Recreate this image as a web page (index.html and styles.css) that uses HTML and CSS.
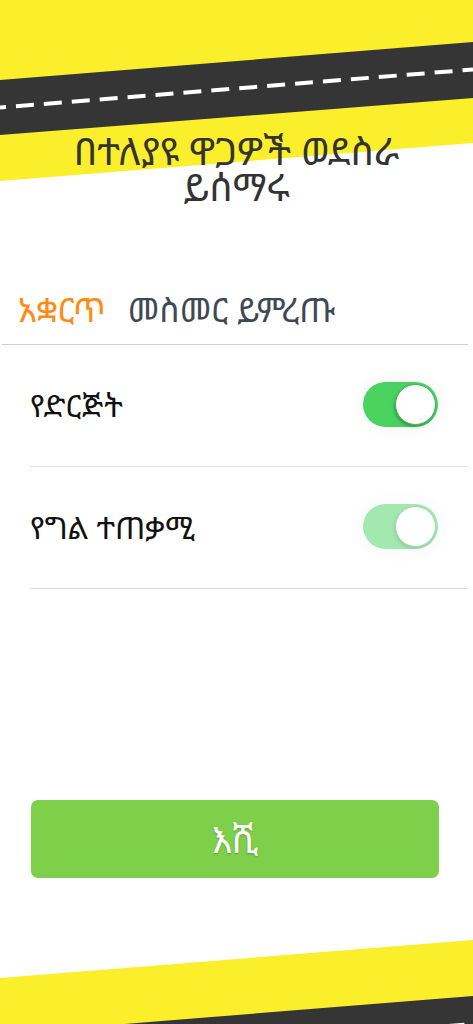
FILE: index.html
```html
<!DOCTYPE html>
<html lang="am">
<head>
    <meta charset="UTF-8">
    <meta name="viewport" content="width=device-width, initial-scale=1.0">
    <title>ወደስራ ይሰማሩ</title>
    <link rel="stylesheet" href="styles.css">
</head>
<body>

    <!-- Road top -->
    <svg class="road road-top" width="473" height="190" viewBox="0 0 473 190">
        <polygon points="0,0 473,0 473,143 0,181" fill="#fbee2b"/>
        <polygon points="0,80 473,42 473,98 0,135" fill="#353535"/>
        <line x1="0" y1="107.5" x2="473" y2="69.5" stroke="#fff" stroke-width="4" stroke-dasharray="18 10" stroke-dashoffset="12"/>
    </svg>

    <!-- Road bottom -->
    <svg class="road road-bottom" width="473" height="90" viewBox="0 934 473 90">
        <polygon points="0,978 473,940 473,1024 0,1024" fill="#fbee2b"/>
        <polygon points="0,1034 473,996 473,1100 0,1100" fill="#353535"/>
        <line x1="0" y1="1062" x2="473" y2="1024" stroke="#fff" stroke-width="4" stroke-dasharray="18 10"/>
    </svg>

    <div class="page">
        <h1 class="title">
            <span class="title-line">በተለያዩ ዋጋዎች ወደስራ</span>
            <span class="title-line">ይሰማሩ</span>
        </h1>

        <div class="tabs">
            <span class="tab tab-cancel">አቋርጥ</span>
            <span class="tab tab-label">መስመር ይምረጡ</span>
        </div>

        <div class="list">
            <div class="row">
                <span class="row-label">የድርጅት</span>
                <div class="toggle on"><div class="knob"></div></div>
            </div>
            <div class="row">
                <span class="row-label">የግል ተጠቃሚ</span>
                <div class="toggle on dim"><div class="knob"></div></div>
            </div>
        </div>

        <button class="btn-ok">እሺ</button>
    </div>

</body>
</html>
```

FILE: styles.css
```css
* {
    margin: 0;
    padding: 0;
    box-sizing: border-box;
}
body {
    width: 473px;
    height: 1024px;
    overflow: hidden;
    position: relative;
    background: #fff;
    font-family: "Noto Sans Ethiopic", "Abyssinica SIL", "Noto Sans", sans-serif;
}

/* Road */
.road {
    position: absolute;
    left: 0;
    display: block;
}
.road-top { top: 0; }
.road-bottom { bottom: 0; }

.page {
    position: relative;
    z-index: 1;
    display: flex;
    flex-direction: column;
}

/* Title */
.title {
    padding-top: 132px;
    display: flex;
    flex-direction: column;
    align-items: center;
    font-size: 38px;
    line-height: 36px;
    font-weight: 400;
    color: #333;
}
.title-line {
    display: block;
    height: 36px;
}

/* Tabs */
.tabs {
    margin: 85px 5px 0 2px;
    padding: 0 0 13px 16px;
    display: flex;
    gap: 22px;
    border-bottom: 1px solid #cfcfcf;
}
.tab {
    font-size: 33px;
    line-height: 42px;
}
.tab-cancel { color: #ff8a14; }
.tab-label { color: #3f4955; }

/* Rows */
.list {
    margin: 0 5px 0 30px;
}
.row {
    display: flex;
    align-items: center;
    justify-content: space-between;
    padding: 37px 30px 39px 0;
    border-bottom: 1px solid #dedede;
}
.row-label {
    font-size: 31px;
    line-height: 40px;
    color: #111;
}

.toggle {
    position: relative;
    width: 75px;
    height: 45px;
    border-radius: 23px;
    background: #e5e5e5;
    box-shadow: 0 0 18px rgba(0, 0, 0, 0.06);
}
.toggle.on {
    background: linear-gradient(90deg, #4cd35f, #44d062);
}
.toggle.dim {
    opacity: 0.5;
}
.knob {
    position: absolute;
    top: 2px;
    right: 2px;
    width: 41px;
    height: 41px;
    border-radius: 50%;
    background: #fff;
    border: 1px solid #3bb552;
    box-shadow: -1px 2px 3px rgba(0, 0, 0, 0.25);
}

/* Button */
.btn-ok {
    margin: 211px 0 0 31px;
    width: 408px;
    height: 78px;
    border: none;
    border-radius: 7px;
    background: #7ecf4a;
    color: #fff;
    font-family: inherit;
    font-size: 36px;
    text-shadow: 0 1px 2px rgba(0, 0, 0, 0.25);
}
```
